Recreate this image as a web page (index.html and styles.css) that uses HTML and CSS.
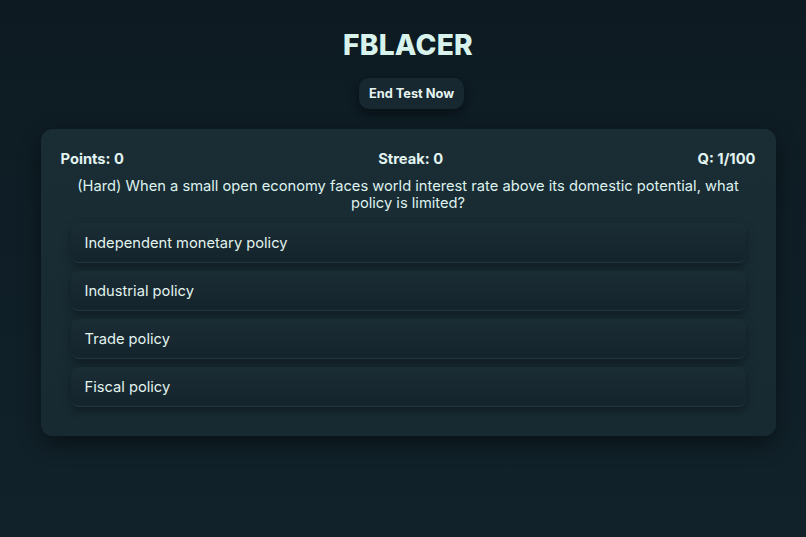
FILE: index.html
```html
<!DOCTYPE html>
<html lang="en">
<head>
<meta charset="utf-8">
<title>FBLACER</title>
<link rel="stylesheet" href="styles.css">
</head>
<body>
<main class="app">
  <h1 class="title">FBLACER</h1>
  <button class="end-btn">End Test Now</button>
  <section class="card">
    <div class="stats">
      <span>Points: 0</span>
      <span>Streak: 0</span>
      <span>Q: 1/100</span>
    </div>
    <p class="question">(Hard) When a small open economy faces world interest rate above its domestic potential, what policy is limited?</p>
    <div class="options">
      <div class="option">Independent monetary policy</div>
      <div class="option">Industrial policy</div>
      <div class="option">Trade policy</div>
      <div class="option">Fiscal policy</div>
    </div>
  </section>
</main>
</body>
</html>
```

FILE: styles.css
```css
html, body {
  margin: 0;
  height: 100%;
}
body {
  background: linear-gradient(180deg, #0d1a21 0%, #0f1e26 40%, #11222a 100%);
  font-family: Inter, "Noto Sans", sans-serif;
  color: #dcf1ec;
}
.app {
  display: flex;
  flex-direction: column;
  align-items: center;
  padding: 0 0 0 10px;
}
.title {
  margin: 27px 0 0;
  font-size: 28.2px;
  font-weight: 800;
  line-height: 36px;
  color: #d8f3ec;
  letter-spacing: 0.2px;
}
.end-btn {
  margin-top: 15px;
  margin-left: 7px;
  height: 31px;
  padding: 0 10px;
  border: none;
  border-radius: 10px;
  background: #172830;
  color: #e6f4f1;
  font-family: Inter, sans-serif;
  font-size: 12.8px;
  font-weight: 700;
  box-shadow: 0 4px 10px rgba(0, 0, 0, 0.45);
}
.card {
  margin-top: 20px;
  width: 695px;
  padding: 21px 20px 29px;
  border-radius: 12px;
  background: linear-gradient(180deg, #1a2d35 0%, #172a32 100%);
  box-shadow: 0 8px 22px rgba(0, 0, 0, 0.45);
}
.stats {
  display: flex;
  justify-content: space-between;
  font-size: 14.7px;
  font-weight: 700;
  line-height: 18px;
  color: #e2f3f0;
}
.question {
  margin: 10px 0 11px;
  text-align: center;
  font-size: 14.7px;
  line-height: 17px;
  color: #def2ee;
}
.options {
  display: flex;
  flex-direction: column;
  gap: 8px;
  margin: 0 10px;
}
.option {
  height: 39px;
  display: flex;
  align-items: center;
  padding: 0 14px;
  border-radius: 8px;
  background: linear-gradient(180deg, #1a2c34 0%, #14242c 100%);
  border-bottom: 1px solid #223840;
  font-size: 14.7px;
  color: #e2f3ee;
  box-shadow: 0 4px 10px rgba(0, 0, 0, 0.35);
}
```
